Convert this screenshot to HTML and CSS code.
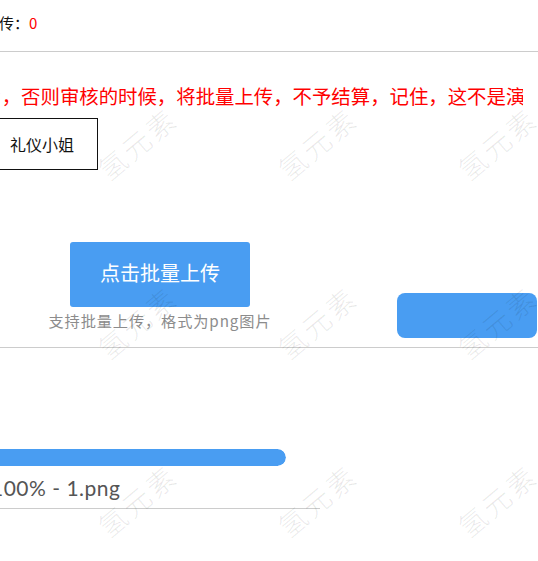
FILE: index.html
```html
<!DOCTYPE html>
<html lang="zh-CN">
<head>
  <meta charset="UTF-8" />
  <meta name="viewport" content="width=device-width, initial-scale=1.0"/>
  <title>批量上传</title>
  <link rel="stylesheet" href="styles.css">
</head>
<body>
  <div class="page">
    <div class="count">已上传：<span class="num">0</span></div>

    <div class="warn-wrap">
      <p class="warn">请上传真实图片，否则审核的时候，将批量上传，不予结算，记住，这不是演示！</p>
    </div>

    <div class="tags">
      <span class="tag">礼仪小姐</span>
    </div>

    <div class="upload">
      <div class="upload-main">
        <button class="btn-upload">点击批量上传</button>
        <div class="hint">支持批量上传，格式为png图片</div>
      </div>
      <button class="btn-submit"></button>
    </div>

    <div class="file">
      <div class="bar"><div class="bar-fill" style="width:100%"></div></div>
      <div class="file-name">100% - 1.png</div>
    </div>
  </div>

  <div class="watermark">
    <span>氢元素</span><span>氢元素</span><span>氢元素</span>
    <span>氢元素</span><span>氢元素</span><span>氢元素</span>
    <span>氢元素</span><span>氢元素</span><span>氢元素</span>
  </div>
</body>
</html>
```

FILE: styles.css
```css
html, body {
  margin: 0;
  padding: 0;
  background: #fff;
}
body {
  width: 538px;
  height: 561px;
  overflow: hidden;
  position: relative;
  font-family: "Noto Sans CJK SC", "Liberation Sans", sans-serif;
  color: #111;
}
.page {
  width: 538px;
  overflow: hidden;
}
.count {
  height: 51px;
  line-height: 46px;
  font-size: 15px;
  font-family: "Noto Sans CJK JP", sans-serif;
  text-indent: -31px;
  border-bottom: 1px solid #ccc;
}
.num {
  color: #f00;
}
.warn-wrap {
  width: 523px;
  overflow: hidden;
}
.warn {
  margin: 30px 0 0 -134px;
  font-size: 19.4px;
  line-height: 28px;
  color: #f00;
  white-space: nowrap;
}
.tags {
  margin-top: 8px;
  height: 52px;
}
.tag {
  display: inline-block;
  margin-left: -14px;
  padding: 0 23px;
  height: 50px;
  line-height: 50px;
  border: 1px solid #111;
  font-size: 16px;
}
.upload {
  display: flex;
  align-items: flex-end;
  margin-top: 72px;
  padding-bottom: 9px;
  border-bottom: 1px solid #ccc;
}
.upload-main {
  width: 222px;
  margin-left: 49px;
  margin-bottom: 8px;
  display: flex;
  flex-direction: column;
  align-items: center;
}
.btn-upload {
  width: 180px;
  height: 65px;
  padding: 0 0 5px;
  border: none;
  border-radius: 3px;
  background: #499df2;
  color: #fff;
  font-family: inherit;
  font-size: 20px;
}
.hint {
  margin-top: 3px;
  line-height: 20px;
  font-size: 15.2px;
  letter-spacing: 0.9px;
  white-space: nowrap;
  color: #8c8c8c;
}
.btn-submit {
  margin-left: auto;
  margin-right: 1px;
  width: 140px;
  height: 45px;
  border: none;
  border-radius: 8px;
  background: #499df2;
}
.file {
  margin: 101px 0 0 -40px;
  width: 360px;
  border-bottom: 1px solid #ccc;
}
.bar {
  width: 326px;
  height: 17px;
  border-radius: 9px;
  overflow: hidden;
}
.bar-fill {
  height: 100%;
  background: #499df2;
  border-radius: 9px;
}
.file-name {
  padding: 5px 0 3px 31px;
  line-height: 34px;
  font-family: Lato, "Liberation Sans", sans-serif;
  font-size: 21px;
  letter-spacing: 0.5px;
  color: #555;
}
.watermark {
  position: absolute;
  inset: 0;
  pointer-events: none;
  display: grid;
  grid-template-columns: repeat(3, 180px);
  grid-auto-rows: 178.5px;
  padding: 54px 0 0 47px;
}
.watermark span {
  display: flex;
  align-items: center;
  justify-content: center;
  transform: rotate(-40deg);
  font-size: 28px;
  font-weight: 300;
  letter-spacing: 3px;
  color: rgba(0, 0, 0, 0.09);
  white-space: nowrap;
}
```
